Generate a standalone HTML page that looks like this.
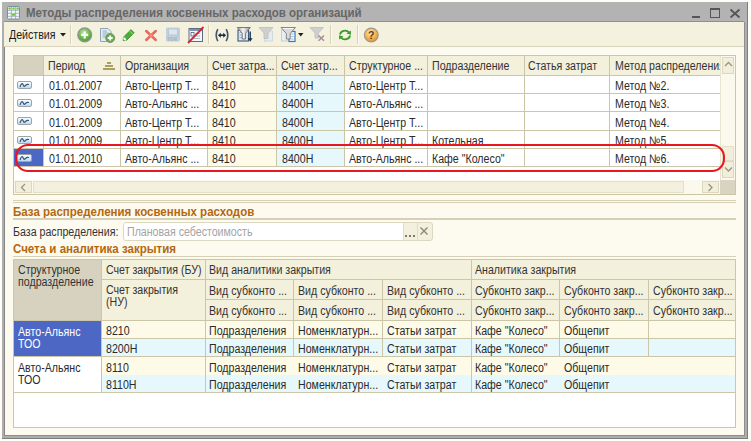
<!DOCTYPE html><html><head><meta charset="utf-8"><style>
*{margin:0;padding:0;box-sizing:border-box}
html,body{width:751px;height:441px;overflow:hidden}
body{position:relative;background:#fefdf8;font-family:"Liberation Sans",sans-serif;color:#2a2a2a}
.a{position:absolute}
.t,.hd{font-size:12.5px;line-height:0;white-space:nowrap;transform:scaleX(.85);transform-origin:0 0}
.hd{color:#333}
.bt,.ttl{font-size:12px;font-weight:bold;line-height:0;white-space:nowrap;transform:scaleX(.96);transform-origin:0 0}
.bt{color:#b4680e}
.ttl{color:#666}
</style></head><body>
<div class="a" style="left:2px;top:2px;width:746px;height:437px;background:#b3b3b3;"></div>
<div class="a" style="left:2px;top:22px;width:746px;height:417px;background:#adadad;"></div>
<div class="a" style="left:747px;top:2px;width:1px;height:437px;background:#7e7e7e"></div>
<div class="a" style="left:2px;top:438px;width:746px;height:1px;background:#7e7e7e"></div>
<div class="a" style="left:4px;top:22px;width:1px;height:413px;background:#858585"></div>
<div class="a" style="left:744px;top:22px;width:1px;height:414px;background:#8e8e8e"></div>
<div class="a" style="left:4px;top:435px;width:741px;height:1px;background:#8e8e8e"></div>
<div class="a" style="left:4px;top:21px;width:740px;height:1px;background:#8f8f8f"></div>
<div class="a" style="left:5px;top:22px;width:739px;height:413px;background:#fdfaf0;"></div>
<div class="a" style="left:4px;top:22px;width:740px;height:24px;background:#f4f1de;"></div>
<div class="a" style="left:4px;top:46px;width:740px;height:1px;background:#d9d4bb"></div>
<div class="a ttl" style="left:26px;top:13.04px;">Методы распределения косвенных расходов организаций</div>
<div class="a" style="left:692px;top:16px;width:8px;height:2px;background:#555"></div>
<div class="a" style="left:710px;top:8px;width:10px;height:10px;border:1.5px solid #555;border-top-width:2px"></div>
<svg class="a" style="left:729px;top:8px" width="12" height="11"><path d="M1.5 1.5L10.5 9.5M10.5 1.5L1.5 9.5" stroke="#555" stroke-width="1.8"/></svg>
<div class="a t" style="left:8.5px;top:35.17px;color:#1c1c1c">Действия</div>
<svg class="a" style="left:60px;top:33px" width="7" height="4"><path d="M0 0H6L3 3.5Z" fill="#222"/></svg>
<div class="a" style="left:70px;top:25px;width:1px;height:19px;background:#d8d3b8"></div>
<div class="a" style="left:71px;top:25px;width:1px;height:19px;background:#fdfbf2"></div>
<div class="a" style="left:208px;top:25px;width:1px;height:19px;background:#d8d3b8"></div>
<div class="a" style="left:209px;top:25px;width:1px;height:19px;background:#fdfbf2"></div>
<div class="a" style="left:330px;top:25px;width:1px;height:19px;background:#d8d3b8"></div>
<div class="a" style="left:331px;top:25px;width:1px;height:19px;background:#fdfbf2"></div>
<div class="a" style="left:357px;top:25px;width:1px;height:19px;background:#d8d3b8"></div>
<div class="a" style="left:358px;top:25px;width:1px;height:19px;background:#fdfbf2"></div>
<svg class="a" style="left:6px;top:5px" width="15" height="15" viewBox="0 0 15 15">
 <rect x="1.5" y="1.5" width="12" height="12.5" rx="1.2" fill="#f6f9fb" stroke="#7f8e9a" stroke-width="1"/>
 <path d="M2 5.3H13M2 8.3H13M2 11.3H13M5.3 2V14M9.6 2V14" stroke="#9aabb8" stroke-width="0.9"/>
 <circle cx="3.6" cy="3.5" r="1.3" fill="#7cc850"/><circle cx="7.5" cy="3.5" r="1.3" fill="#7cc850"/><circle cx="11.6" cy="3.5" r="1.3" fill="#7cc850"/>
 <rect x="6" y="9" width="3" height="1.7" fill="#6cc040"/>
</svg>
<svg class="a" style="left:76px;top:26px" width="18" height="18" viewBox="0 0 18 18">
 <defs><radialGradient id="gg" cx="0.45" cy="0.35" r="0.65"><stop offset="0" stop-color="#c4ecae"/><stop offset="0.55" stop-color="#72bc54"/><stop offset="1" stop-color="#4a9a34"/></radialGradient></defs>
 <circle cx="8.7" cy="8.9" r="6.9" fill="url(#gg)" stroke="#92988a" stroke-width="1.3"/>
 <path d="M8.7 5.4V12.4M5.2 8.9H12.2" stroke="#fff" stroke-width="2.1"/>
</svg>
<svg class="a" style="left:99px;top:27px" width="17" height="17" viewBox="0 0 17 17">
 <path d="M1.5 1.5H9L12 4.5V14.5H1.5Z" fill="#e2ecf4" stroke="#8ea4b8" stroke-width="1"/>
 <path d="M3.5 4H8M3.5 6H9.5M3.5 8H9.5M3.5 10H7" stroke="#8c9cac" stroke-width="0.8"/>
 <circle cx="11.2" cy="11" r="4.5" fill="#62b046" stroke="#7c8a74" stroke-width="0.9"/>
 <path d="M11.2 8.5V13.5M8.7 11H13.7" stroke="#fff" stroke-width="1.8"/>
</svg>
<svg class="a" style="left:121px;top:28px" width="15" height="14" viewBox="0 0 15 14">
 <path d="M10 1.6L13.2 4.8L5.6 12.4L2.2 12.6L2.4 9.2Z" fill="#4aae34" stroke="#2e8a22" stroke-width="0.7"/>
 <path d="M8.8 3.2L11.8 6.2" stroke="#a4e488" stroke-width="1"/>
 <path d="M2.4 9.2L4.2 9.8L5.6 12.4L2.2 12.6Z" fill="#ffffff"/>
 <path d="M2.2 11.2L2.2 12.6L3.6 12.5Z" fill="#1c4414"/>
</svg>
<svg class="a" style="left:144px;top:29px" width="14" height="13" viewBox="0 0 14 13">
 <path d="M2.2 2L11.8 11M11.8 2L2.2 11" stroke="#e8685c" stroke-width="2.5" stroke-linecap="round"/>
 <path d="M5.5 5.2L8.5 7.8M8.5 5.2L5.5 7.8" stroke="#f4a89e" stroke-width="1"/>
</svg>
<svg class="a" style="left:165px;top:27px" width="16" height="16" viewBox="0 0 16 16">
 <rect x="1" y="0.5" width="14" height="14" rx="1.5" fill="#c2d0dc"/>
 <rect x="3.5" y="2" width="9" height="6" fill="#dbe6ee" stroke="#b4c4d0" stroke-width="0.8"/>
 <text x="2" y="14" font-family="Liberation Sans" font-size="6.5" font-weight="bold" fill="#a4b8c8">ток</text>
</svg>
<svg class="a" style="left:187px;top:26px" width="18" height="18" viewBox="0 0 18 18">
 <rect x="2" y="2.5" width="13.5" height="13" fill="#f4f8fc" stroke="#5c6c84" stroke-width="1"/>
 <rect x="2.5" y="3" width="12.5" height="2" fill="#8092ac"/>
 <rect x="4" y="6.5" width="3" height="3.5" fill="#fff" stroke="#506080" stroke-width="0.8"/>
 <path d="M8.5 7.5H13M8.5 10H13M4 12.5H13" stroke="#9aa8b8" stroke-width="0.8"/>
 <path d="M1 17L16.5 1" stroke="#d8242a" stroke-width="1.8"/>
</svg>
<svg class="a" style="left:214px;top:28px" width="16" height="15" viewBox="0 0 16 15">
 <path d="M3.8 1.2Q0.6 7.1 3.8 13.2M12.2 1.2Q15.4 7.1 12.2 13.2" stroke="#46545e" stroke-width="1.6" fill="none"/>
 <path d="M5.5 7.2H10.5" stroke="#15304a" stroke-width="1.6"/>
 <path d="M3.9 7.2L6.8 4.7V9.7Z M12.1 7.2L9.2 4.7V9.7Z" fill="#15304a"/>
</svg>
<svg class="a" style="left:236px;top:26px" width="17" height="17" viewBox="0 0 17 17">
 <defs><linearGradient id="fg" x1="0" y1="0" x2="1" y2="0"><stop offset="0" stop-color="#9a9a9a"/><stop offset="0.45" stop-color="#f4f4f4"/><stop offset="1" stop-color="#8a8a8a"/></linearGradient></defs>
 <rect x="2" y="4" width="10.5" height="11" fill="#dce8f4" stroke="#3c5878" stroke-width="1.1"/>
 <path d="M3.5 6.5H6M3.5 9H6M3.5 11.5H6" stroke="#8aa4c0" stroke-width="0.8"/>
 <path d="M1.2 1.5H14.3L9.6 7.2V13H6.2V7.2Z" fill="url(#fg)" stroke="#6c6c6c" stroke-width="0.9"/>
 <path d="M14.2 5.5V13" stroke="#1e3246" stroke-width="1.4"/>
 <path d="M11.8 12.2H16.6L14.2 15.8Z" fill="#1e3246"/>
</svg>
<svg class="a" style="left:258px;top:26px" width="16" height="16" viewBox="0 0 16 16">
 <rect x="6.5" y="5" width="8" height="10" fill="#e4ecf0" stroke="#c8d4dc" stroke-width="0.8"/>
 <path d="M1 1.5H15L10 7V12.5H6V7Z" fill="#cfcfcf" stroke="#bdbdbd" stroke-width="0.8"/>
</svg>
<svg class="a" style="left:280px;top:26px" width="17" height="17" viewBox="0 0 17 17">
 <rect x="1.5" y="4" width="8" height="11" fill="#e8eef2" stroke="#bcc6cc" stroke-width="0.8"/>
 <rect x="9" y="5.5" width="6" height="10" fill="#f4f8fc" stroke="#3a78c0" stroke-width="1.2"/>
 <path d="M10.5 8H13.5M10.5 10.5H13.5M10.5 13H13.5" stroke="#8ab0d8" stroke-width="0.8"/>
 <path d="M1 1.5H15.5L10.2 7.5V13H6.3V7.5Z" fill="#dadada" stroke="#7a7a7a" stroke-width="0.9"/>
 <path d="M3 2.5H13.5" stroke="#fff" stroke-width="0.8"/>
</svg>
<svg class="a" style="left:298px;top:33px" width="6" height="4"><path d="M0 0H5.5L2.75 3.5Z" fill="#222"/></svg>
<svg class="a" style="left:309px;top:26px" width="17" height="16" viewBox="0 0 17 16">
 <path d="M1 1.5H14.5L9.5 7V12H6V7Z" fill="#cfcfcf" stroke="#bebebe" stroke-width="0.8"/>
 <path d="M9.5 9.5L15 14.8M15 9.5L9.5 14.8" stroke="#a88c96" stroke-width="1.5"/>
</svg>
<svg class="a" style="left:337px;top:29px" width="16" height="12" viewBox="0 0 16 12">
 <path d="M3 5.5A5 4.5 0 0 1 12 3.5" stroke="#3a9a2c" stroke-width="1.8" fill="none"/>
 <path d="M13 6.5A5 4.5 0 0 1 4 8.5" stroke="#3a9a2c" stroke-width="1.8" fill="none"/>
 <path d="M9.5 4.5L14 5.8L13.8 1.5Z" fill="#3a9a2c"/>
 <path d="M6.5 7.5L2 6.2L2.2 10.5Z" fill="#3a9a2c"/>
</svg>
<svg class="a" style="left:363px;top:27px" width="17" height="17" viewBox="0 0 17 17">
 <defs><radialGradient id="og" cx="0.45" cy="0.35" r="0.65"><stop offset="0" stop-color="#ffe8b8"/><stop offset="0.55" stop-color="#f4b85a"/><stop offset="1" stop-color="#de9030"/></radialGradient></defs>
 <circle cx="8.3" cy="8" r="6.9" fill="url(#og)" stroke="#9c9a90" stroke-width="1.2"/>
 <text x="8.3" y="12" text-anchor="middle" font-family="Liberation Sans" font-size="10.5" font-weight="bold" fill="#5a3a1a">?</text>
</svg>

<div class="a" style="left:13px;top:55px;width:723px;height:140px;background:#ffffff;"></div>
<div class="a" style="left:13px;top:55px;width:707px;height:20px;background:#f3f0dc;"></div>
<div class="a" style="left:13px;top:55px;width:30px;height:20px;background:#d6d2bf;"></div>
<div class="a" style="left:207px;top:75px;width:69px;height:91px;background:#fdfbe7;"></div>
<div class="a" style="left:276px;top:75px;width:68px;height:91px;background:#e7f8fc;"></div>
<div class="a" style="left:13px;top:148px;width:30px;height:18px;background:#4d68c4;"></div>
<div class="a" style="left:13px;top:75px;width:707px;height:1px;background:#cbc6a7"></div>
<div class="a" style="left:13px;top:93px;width:707px;height:1px;background:#cbc6a7"></div>
<div class="a" style="left:13px;top:111px;width:707px;height:1px;background:#cbc6a7"></div>
<div class="a" style="left:13px;top:130px;width:707px;height:1px;background:#cbc6a7"></div>
<div class="a" style="left:13px;top:148px;width:707px;height:1px;background:#cbc6a7"></div>
<div class="a" style="left:13px;top:166px;width:707px;height:1px;background:#cbc6a7"></div>
<div class="a" style="left:43px;top:55px;width:1px;height:111px;background:#cbc6a7"></div>
<div class="a" style="left:120px;top:55px;width:1px;height:111px;background:#cbc6a7"></div>
<div class="a" style="left:207px;top:55px;width:1px;height:111px;background:#cbc6a7"></div>
<div class="a" style="left:276px;top:55px;width:1px;height:111px;background:#cbc6a7"></div>
<div class="a" style="left:344px;top:55px;width:1px;height:111px;background:#cbc6a7"></div>
<div class="a" style="left:427px;top:55px;width:1px;height:111px;background:#cbc6a7"></div>
<div class="a" style="left:524px;top:55px;width:1px;height:111px;background:#cbc6a7"></div>
<div class="a" style="left:609px;top:55px;width:1px;height:111px;background:#cbc6a7"></div>
<div class="a" style="left:720px;top:56px;width:15px;height:124px;background:#fbf9ee;"></div>
<div class="a" style="left:720px;top:56px;width:1px;height:138px;background:#e8e4cf"></div>
<div class="a" style="left:722px;top:57px;width:12px;height:17px;background:#f1eedb;border:1px solid #ddd8bd"></div>
<div class="a" style="left:722px;top:146px;width:12px;height:15px;background:#f1eedb;border:1px solid #e4e0c8"></div>
<div class="a" style="left:722px;top:161px;width:12px;height:17px;background:#f1eedb;border:1px solid #ddd8bd"></div>
<svg class="a" style="left:724px;top:61px" width="9" height="7"><path d="M1 5L4.5 1.5L8 5" stroke="#9a957a" stroke-width="1.3" fill="none"/></svg>
<svg class="a" style="left:724px;top:166px" width="9" height="7"><path d="M1 1.5L4.5 5L8 1.5" stroke="#9a957a" stroke-width="1.3" fill="none"/></svg>
<div class="a" style="left:13px;top:180px;width:707px;height:14px;background:#fbf9ee;"></div>
<div class="a" style="left:15px;top:181px;width:17px;height:12px;background:#f1eedb;border:1px solid #ddd8bd"></div>
<div class="a" style="left:33px;top:181px;width:651px;height:12px;background:#f3f0df;border:1px solid #e4e0c8"></div>
<div class="a" style="left:702px;top:181px;width:17px;height:12px;background:#f1eedb;border:1px solid #ddd8bd"></div>
<svg class="a" style="left:20px;top:183px" width="7" height="9"><path d="M5 1L1.5 4.5L5 8" stroke="#9a957a" stroke-width="1.3" fill="none"/></svg>
<svg class="a" style="left:707px;top:183px" width="7" height="9"><path d="M1.5 1L5 4.5L1.5 8" stroke="#9a957a" stroke-width="1.3" fill="none"/></svg>
<div class="a" style="left:720px;top:180px;width:15px;height:14px;background:#d8d4c1;"></div>
<div class="a" style="left:13px;top:55px;width:723px;height:140px;border:1px solid #cbc6a7"></div>
<div class="a hd" style="left:48px;top:66.17px;">Период</div>
<div class="a hd" style="left:124.5px;top:66.17px;">Организация</div>
<div class="a hd" style="left:212px;top:66.17px;">Счет затра...</div>
<div class="a hd" style="left:281px;top:66.17px;">Счет затр...</div>
<div class="a hd" style="left:348.5px;top:66.17px;">Структурное ...</div>
<div class="a hd" style="left:432px;top:66.17px;">Подразделение</div>
<div class="a hd" style="left:528px;top:66.17px;">Статья затрат</div>
<div class="a" style="left:610px;top:56px;width:110px;height:19px;overflow:hidden">
<div class="a hd" style="left:4.5px;top:10.17px;">Метод распределения</div>
</div>
<div class="a" style="left:107px;top:62px;width:4px;height:1.5px;background:#aa9f60"></div>
<div class="a" style="left:105px;top:65px;width:8px;height:1.5px;background:#aa9f60"></div>
<div class="a" style="left:103px;top:68px;width:12px;height:1.5px;background:#aa9f60"></div>
<div class="a t" style="left:48.5px;top:85.67px;">01.01.2007</div>
<div class="a t" style="left:125px;top:85.67px;">Авто-Центр Т...</div>
<div class="a t" style="left:211.5px;top:85.67px;">8410</div>
<div class="a t" style="left:281.5px;top:85.67px;">8400Н</div>
<div class="a t" style="left:349px;top:85.67px;">Авто-Центр Т...</div>
<div class="a t" style="left:614.5px;top:85.67px;">Метод №2.</div>
<svg class="a" style="left:17px;top:81px" width="15" height="8"><rect x="0.5" y="0.5" width="14" height="7" rx="1.5" fill="url(#ig)" stroke="#9ea3a8"/><path d="M3 6C4 3 5 1.5 6 3.5S7 6 8.5 4.5 10 3.5 12 3.5" stroke="#35597a" stroke-width="1.2" fill="none"/></svg>
<div class="a t" style="left:48.5px;top:103.67px;">01.01.2009</div>
<div class="a t" style="left:125px;top:103.67px;">Авто-Альянс ...</div>
<div class="a t" style="left:211.5px;top:103.67px;">8410</div>
<div class="a t" style="left:281.5px;top:103.67px;">8400Н</div>
<div class="a t" style="left:349px;top:103.67px;">Авто-Альянс ...</div>
<div class="a t" style="left:614.5px;top:103.67px;">Метод №3.</div>
<svg class="a" style="left:17px;top:99px" width="15" height="8"><rect x="0.5" y="0.5" width="14" height="7" rx="1.5" fill="url(#ig)" stroke="#9ea3a8"/><path d="M3 6C4 3 5 1.5 6 3.5S7 6 8.5 4.5 10 3.5 12 3.5" stroke="#35597a" stroke-width="1.2" fill="none"/></svg>
<div class="a t" style="left:48.5px;top:122.67px;">01.01.2009</div>
<div class="a t" style="left:125px;top:122.67px;">Авто-Центр Т...</div>
<div class="a t" style="left:211.5px;top:122.67px;">8410</div>
<div class="a t" style="left:281.5px;top:122.67px;">8400Н</div>
<div class="a t" style="left:349px;top:122.67px;">Авто-Центр Т...</div>
<div class="a t" style="left:614.5px;top:122.67px;">Метод №4.</div>
<svg class="a" style="left:17px;top:117px" width="15" height="8"><rect x="0.5" y="0.5" width="14" height="7" rx="1.5" fill="url(#ig)" stroke="#9ea3a8"/><path d="M3 6C4 3 5 1.5 6 3.5S7 6 8.5 4.5 10 3.5 12 3.5" stroke="#35597a" stroke-width="1.2" fill="none"/></svg>
<div class="a t" style="left:48.5px;top:140.67px;">01.01.2009</div>
<div class="a t" style="left:125px;top:140.67px;">Авто-Центр Т...</div>
<div class="a t" style="left:211.5px;top:140.67px;">8410</div>
<div class="a t" style="left:281.5px;top:140.67px;">8400Н</div>
<div class="a t" style="left:349px;top:140.67px;">Авто-Центр Т...</div>
<div class="a t" style="left:432px;top:140.67px;">Котельная</div>
<div class="a t" style="left:614.5px;top:140.67px;">Метод №5.</div>
<svg class="a" style="left:17px;top:136px" width="15" height="8"><rect x="0.5" y="0.5" width="14" height="7" rx="1.5" fill="url(#ig)" stroke="#9ea3a8"/><path d="M3 6C4 3 5 1.5 6 3.5S7 6 8.5 4.5 10 3.5 12 3.5" stroke="#35597a" stroke-width="1.2" fill="none"/></svg>
<div class="a t" style="left:48.5px;top:158.67px;">01.01.2010</div>
<div class="a t" style="left:125px;top:158.67px;">Авто-Альянс ...</div>
<div class="a t" style="left:211.5px;top:158.67px;">8410</div>
<div class="a t" style="left:281.5px;top:158.67px;">8400Н</div>
<div class="a t" style="left:349px;top:158.67px;">Авто-Альянс ...</div>
<div class="a t" style="left:432px;top:158.67px;">Кафе "Колесо"</div>
<div class="a t" style="left:614.5px;top:158.67px;">Метод №6.</div>
<svg class="a" style="left:17px;top:154px" width="15" height="8"><rect x="0.5" y="0.5" width="14" height="7" rx="1.5" fill="url(#ig)" stroke="#9ea3a8"/><path d="M3 6C4 3 5 1.5 6 3.5S7 6 8.5 4.5 10 3.5 12 3.5" stroke="#35597a" stroke-width="1.2" fill="none"/></svg>
<svg width="0" height="0" class="a"><defs><linearGradient id="ig" x1="0" y1="0" x2="0" y2="1"><stop offset="0" stop-color="#ffffff"/><stop offset="1" stop-color="#b8d8f0"/></linearGradient></defs></svg>
<div class="a" style="left:15px;top:144px;width:710px;height:28px;border:2.5px solid #e8161e;border-radius:13px"></div>
<div class="a" style="left:13px;top:200px;width:723px;height:1px;background:#d6d1b6"></div>
<div class="a" style="left:13px;top:202px;width:723px;height:1px;background:#d6d1b6"></div>
<div class="a bt" style="left:13px;top:212.14px;">База распределения косвенных расходов</div>
<div class="a" style="left:13px;top:218px;width:723px;height:1.5px;background:#d6d1b6"></div>
<div class="a t" style="left:13px;top:232.17px;color:#333">База распределения:</div>
<div class="a" style="left:122.5px;top:222px;width:310px;height:18.5px;border:1px solid #dcd7bf;border-radius:3px;background:#f3f0de"></div>
<div class="a" style="left:123.5px;top:223px;width:279.0px;height:16.5px;background:#ffffff;border-radius:2px 0 0 2px"></div>
<div class="a" style="left:402.5px;top:223px;width:1px;height:16.5px;background:#e2ddc6"></div>
<div class="a" style="left:417px;top:223px;width:1px;height:16.5px;background:#e2ddc6"></div>
<div class="a t" style="left:126.5px;top:232.17px;color:#a3a3a3">Плановая себестоимость</div>
<div class="a" style="left:404.5px;top:235px;width:2px;height:2px;background:#7d7a6a"></div>
<div class="a" style="left:408.5px;top:235px;width:2px;height:2px;background:#7d7a6a"></div>
<div class="a" style="left:412.5px;top:235px;width:2px;height:2px;background:#7d7a6a"></div>
<svg class="a" style="left:419px;top:226px" width="10" height="10"><path d="M1.5 1.5L8.5 8.5M8.5 1.5L1.5 8.5" stroke="#8c8878" stroke-width="1.4"/></svg>
<div class="a bt" style="left:13px;top:249.34px;">Счета и аналитика закрытия</div>
<div class="a" style="left:13px;top:255.5px;width:723px;height:1.5px;background:#d6d1b6"></div>
<div class="a" style="left:13px;top:259px;width:723px;height:169px;background:#ffffff;"></div>
<div class="a" style="left:13px;top:259px;width:722px;height:61px;background:#f3f0dc;"></div>
<div class="a" style="left:13px;top:259px;width:88px;height:61px;background:#d6d2bf;"></div>
<div class="a" style="left:101px;top:320px;width:634px;height:18px;background:#fdfbe7;"></div>
<div class="a" style="left:101px;top:338px;width:634px;height:18px;background:#e7f8fc;"></div>
<div class="a" style="left:101px;top:356px;width:634px;height:19px;background:#fdfbe7;"></div>
<div class="a" style="left:101px;top:375px;width:634px;height:17px;background:#e7f8fc;"></div>
<div class="a" style="left:13px;top:320px;width:88px;height:36px;background:#4d68c4;"></div>
<div class="a" style="left:101px;top:279px;width:634px;height:1px;background:#cbc6a7"></div>
<div class="a" style="left:205px;top:299px;width:530px;height:1px;background:#cbc6a7"></div>
<div class="a" style="left:13px;top:320px;width:722px;height:1px;background:#cbc6a7"></div>
<div class="a" style="left:101px;top:259px;width:1px;height:133px;background:#cbc6a7"></div>
<div class="a" style="left:205px;top:259px;width:1px;height:133px;background:#cbc6a7"></div>
<div class="a" style="left:471px;top:259px;width:1px;height:133px;background:#cbc6a7"></div>
<div class="a" style="left:293px;top:279px;width:1px;height:77px;background:#cbc6a7"></div>
<div class="a" style="left:382px;top:279px;width:1px;height:77px;background:#cbc6a7"></div>
<div class="a" style="left:559px;top:279px;width:1px;height:77px;background:#cbc6a7"></div>
<div class="a" style="left:648px;top:279px;width:1px;height:77px;background:#cbc6a7"></div>
<div class="a" style="left:101px;top:338px;width:634px;height:1px;background:#cbc6a7"></div>
<div class="a" style="left:13px;top:356px;width:722px;height:1px;background:#cbc6a7"></div>
<div class="a" style="left:13px;top:392px;width:722px;height:1px;background:#cbc6a7"></div>
<div class="a" style="left:13px;top:259px;width:723px;height:169px;border:1px solid #cbc6a7"></div>
<div class="a hd" style="left:17.5px;top:270.17px;">Структурное</div>
<div class="a hd" style="left:17.5px;top:282.17px;">подразделение</div>
<div class="a hd" style="left:106px;top:270.17px;">Счет закрытия (БУ)</div>
<div class="a hd" style="left:106px;top:289.77px;">Счет закрытия</div>
<div class="a hd" style="left:106px;top:301.87px;">(НУ)</div>
<div class="a hd" style="left:209px;top:270.17px;">Вид аналитики закрытия</div>
<div class="a hd" style="left:475px;top:270.17px;">Аналитика закрытия</div>
<div class="a hd" style="left:209px;top:290.67px;">Вид субконто ...</div>
<div class="a hd" style="left:297.5px;top:290.67px;">Вид субконто ...</div>
<div class="a hd" style="left:386.5px;top:290.67px;">Вид субконто ...</div>
<div class="a hd" style="left:475px;top:290.67px;">Субконто закр...</div>
<div class="a hd" style="left:563.5px;top:290.67px;">Субконто закр...</div>
<div class="a hd" style="left:652.5px;top:290.67px;">Субконто закр...</div>
<div class="a hd" style="left:209px;top:311.17px;">Вид субконто ...</div>
<div class="a hd" style="left:297.5px;top:311.17px;">Вид субконто ...</div>
<div class="a hd" style="left:386.5px;top:311.17px;">Вид субконто ...</div>
<div class="a hd" style="left:475px;top:311.17px;">Субконто закр...</div>
<div class="a hd" style="left:563.5px;top:311.17px;">Субконто закр...</div>
<div class="a hd" style="left:652.5px;top:311.17px;">Субконто закр...</div>
<div class="a t" style="left:17.5px;top:331.67px;color:#fff">Авто-Альянс</div>
<div class="a t" style="left:17.5px;top:343.67px;color:#fff">ТОО</div>
<div class="a t" style="left:17.5px;top:368.17px;">Авто-Альянс</div>
<div class="a t" style="left:17.5px;top:380.17px;">ТОО</div>
<div class="a t" style="left:106px;top:330.67px;">8210</div>
<div class="a t" style="left:209px;top:330.67px;">Подразделения</div>
<div class="a t" style="left:297.5px;top:330.67px;">Номенклатурн...</div>
<div class="a t" style="left:386.5px;top:330.67px;">Статьи затрат</div>
<div class="a t" style="left:475px;top:330.67px;">Кафе "Колесо"</div>
<div class="a t" style="left:563.5px;top:330.67px;">Общепит</div>
<div class="a t" style="left:106px;top:348.67px;">8200Н</div>
<div class="a t" style="left:209px;top:348.67px;">Подразделения</div>
<div class="a t" style="left:297.5px;top:348.67px;">Номенклатурн...</div>
<div class="a t" style="left:386.5px;top:348.67px;">Статьи затрат</div>
<div class="a t" style="left:475px;top:348.67px;">Кафе "Колесо"</div>
<div class="a t" style="left:563.5px;top:348.67px;">Общепит</div>
<div class="a t" style="left:106px;top:367.67px;">8110</div>
<div class="a t" style="left:209px;top:367.67px;">Подразделения</div>
<div class="a t" style="left:297.5px;top:367.67px;">Номенклатурн...</div>
<div class="a t" style="left:386.5px;top:367.67px;">Статьи затрат</div>
<div class="a t" style="left:475px;top:367.67px;">Кафе "Колесо"</div>
<div class="a t" style="left:563.5px;top:367.67px;">Общепит</div>
<div class="a t" style="left:106px;top:384.67px;">8110Н</div>
<div class="a t" style="left:209px;top:384.67px;">Подразделения</div>
<div class="a t" style="left:297.5px;top:384.67px;">Номенклатурн...</div>
<div class="a t" style="left:386.5px;top:384.67px;">Статьи затрат</div>
<div class="a t" style="left:475px;top:384.67px;">Кафе "Колесо"</div>
<div class="a t" style="left:563.5px;top:384.67px;">Общепит</div>
</body></html>
